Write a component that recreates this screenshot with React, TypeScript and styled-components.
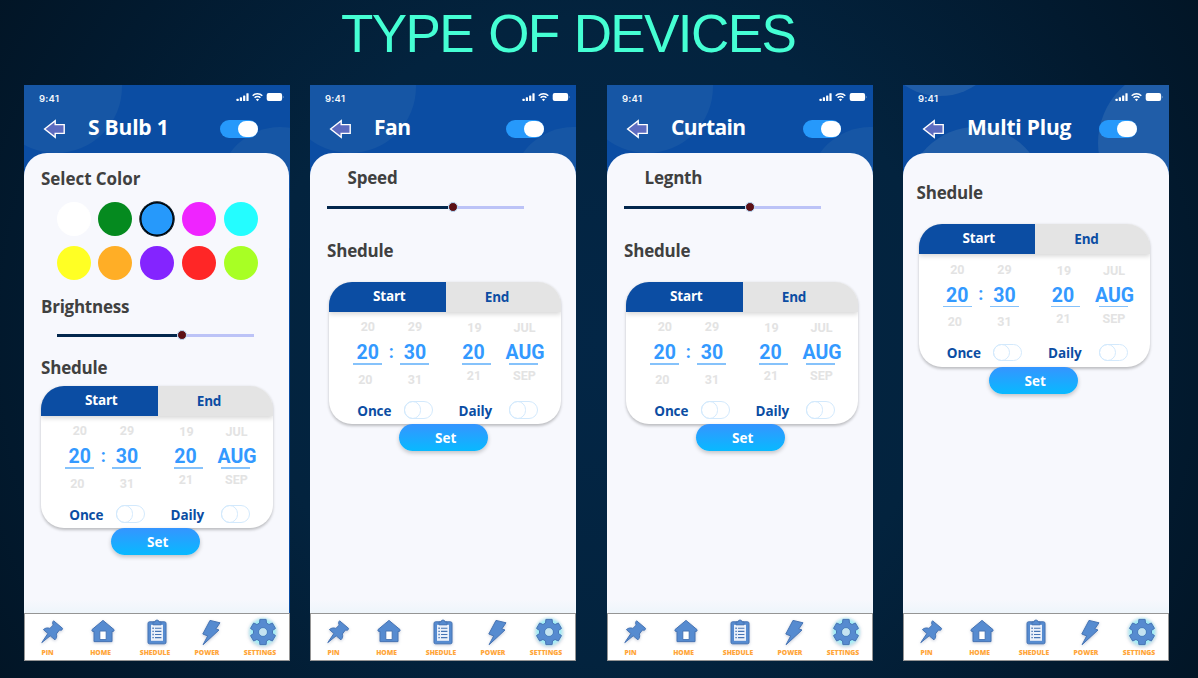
import React from "react";
import styled, { createGlobalStyle } from "styled-components";

const GlobalStyle = createGlobalStyle`
  *, *::before, *::after { box-sizing: border-box; }
  body { margin: 0; }
`;

const humanist = `"Open Sans", "Noto Sans", sans-serif`;
const grotesk = `Roboto, "Liberation Sans", sans-serif`;

const Slide = styled.main`
  width: 1198px;
  height: 678px;
  overflow: hidden;
  background: radial-gradient(ellipse 760px 720px at 600px 340px, #032646 0%, #03233e 45%, #021a2f 75%, #021322 100%);
`;

const SlideTitle = styled.h1`
  margin: 0;
  height: 85px;
  padding: 2px 0 0 341px;
  font: 400 53px/64px "Liberation Sans", Arial, sans-serif;
  letter-spacing: -1.6px;
  word-spacing: 2px;
  color: #45ffd4;
  white-space: nowrap;
`;

const Gallery = styled.div`
  display: grid;
  grid-template-columns: 286px 297px 296px 266px;
  padding-left: 24px;
`;

const Phone = styled.section`
  position: relative;
  display: flex;
  flex-direction: column;
  width: 266px;
  height: 576px;
  overflow: hidden;
  background: #0b4da3;
`;

const Bubble = styled.span<{ $x: number; $y: number; $r: number; $alpha: number }>`
  position: absolute;
  left: ${(p) => p.$x - p.$r}px;
  top: ${(p) => p.$y - p.$r}px;
  width: ${(p) => p.$r * 2}px;
  height: ${(p) => p.$r * 2}px;
  border-radius: 50%;
  background: rgba(240, 255, 225, ${(p) => p.$alpha});
`;

const StatusBar = styled.div`
  position: relative;
  display: flex;
  justify-content: space-between;
  height: 28px;
  padding: 7px 4.5px 0 15px;
`;

const Clock = styled.span`
  font: 600 9.5px/13px Inter, sans-serif;
  letter-spacing: 0.25px;
  color: #f2f6fc;
`;

const TitleBar = styled.header`
  position: relative;
  display: flex;
  align-items: flex-start;
  height: 40px;
  padding: 0 32px 0 19px;
`;

const BackArrow = styled.svg`
  flex: none;
  width: 23px;
  height: 20px;
  margin: 6px 22px 0 0;
`;

const DeviceName = styled.h2<{ $spacing: number }>`
  flex: 1;
  margin: 0;
  font: 700 21px/28px ${humanist};
  letter-spacing: ${(p) => p.$spacing}px;
  color: #fff;
  white-space: nowrap;
`;

const PowerToggle = styled.span`
  display: flex;
  justify-content: flex-end;
  width: 38px;
  height: 18px;
  margin-top: 7px;
  border-radius: 9px;
  background: #2699fb;
  &::after {
    content: "";
    width: 20px;
    height: 16px;
    margin: 1px 0.5px;
    border-radius: 8px;
    background: #fff;
  }
`;

const Sheet = styled.div<{ $inset?: boolean }>`
  position: relative;
  flex: 1;
  width: ${(p) => (p.$inset ? 264.5 : 266)}px;
  border-radius: 23px 23px 0 0;
  background: linear-gradient(#f7f8fd 0, #f7f8fd 97%, #eef5fb 100%);
`;

const Heading = styled.h3<{ $top: number; $left: number; $spacing?: number }>`
  margin: 0 0 -1px;
  padding: ${(p) => p.$top + 1}px 0 0 ${(p) => p.$left}px;
  font: 700 17px/24px ${humanist};
  letter-spacing: ${(p) => p.$spacing ?? -0.2}px;
  color: #404040;
`;

const Palette = styled.div`
  display: grid;
  grid-template-columns: repeat(5, 34px);
  gap: 9.5px 7.85px;
  padding: 12px 0 0 32.5px;
`;

const Swatch = styled.span<{ $color: string; $selected?: boolean }>`
  height: 34px;
  border-radius: 50%;
  background: ${(p) => p.$color};
  box-shadow: ${(p) => (p.$selected ? "inset 0 0 0 1.5px #000, 0 0 0 0.7px #000" : "none")};
`;

const Slider = styled.div<{ $top: number; $left: number }>`
  display: flex;
  align-items: center;
  width: 197px;
  height: 10px;
  margin: ${(p) => p.$top}px 0 0 ${(p) => p.$left}px;
  &::before {
    content: "";
    width: 120.5px;
    height: 3px;
    background: #03274d;
  }
  &::after {
    content: "";
    flex: 1;
    height: 3px;
    background: #bcc3f7;
  }
`;

const Thumb = styled.span`
  width: 10px;
  height: 10px;
  border: 1px solid #b5daf8;
  border-radius: 50%;
  background: #5c1015;
`;

const ScheduleCard = styled.div<{ $top: number; $left: number }>`
  width: 231.5px;
  height: 142.5px;
  margin: ${(p) => p.$top}px 0 0 ${(p) => p.$left}px;
  overflow: hidden;
  border-radius: 23px;
  background: #fff;
  box-shadow: 0 1.5px 3px rgba(0, 0, 0, 0.24);
`;

const Tabs = styled.div`
  display: grid;
  grid-template-columns: 116.5px 115px;
  height: 30px;
  background: #e4e4e4;
  box-shadow: 0 2px 5px rgba(0, 0, 0, 0.17);
`;

const Tab = styled.span<{ $active?: boolean }>`
  height: 30px;
  padding-left: ${(p) => (p.$active ? 4 : 0)}px;
  padding-right: ${(p) => (p.$active ? 0 : 12)}px;
  font: 700 13.5px/${(p) => (p.$active ? 29 : 30)}px ${humanist};
  letter-spacing: -0.15px;
  text-align: center;
  color: ${(p) => (p.$active ? "#fff" : "#0b4da3")};
  background: ${(p) => (p.$active ? "#0b4da3" : "transparent")};
`;

const Picker = styled.div`
  display: flex;
  height: 88px;
  padding-left: 24.3px;
`;

const Wheel = styled.div<{ $gap: number }>`
  display: flex;
  flex-direction: column;
  align-items: center;
  width: 29px;
  margin-right: ${(p) => p.$gap}px;
  white-space: nowrap;
`;

const Faded = styled.span<{ $top: number; $shift?: number }>`
  height: ${(p) => 16 + p.$top}px;
  padding-top: ${(p) => p.$top}px;
  margin-left: ${(p) => p.$shift ?? 0}px;
  font: 700 12.5px/16px ${grotesk};
  color: #e3e3e3;
`;

const Spacer = styled.span<{ $h: number }>`
  height: ${(p) => p.$h}px;
`;

const Chosen = styled.span<{ $shift?: number }>`
  height: 22px;
  margin-left: ${(p) => p.$shift ?? 0}px;
  font: 700 19.5px/25.5px ${grotesk};
  color: #3399ff;
`;

const Underline = styled.span`
  width: 29px;
  height: 1.5px;
  margin-top: 1px;
  background: #85c2fb;
`;

const Colon = styled.span`
  width: 18.2px;
  padding-top: 30px;
  font: 700 18px/20px ${grotesk};
  text-align: center;
  color: #3399ff;
`;

const RepeatRow = styled.div`
  display: flex;
  padding-left: 28.3px;
  font: 700 13.5px/22px ${humanist};
  letter-spacing: -0.15px;
  color: #0b4da3;
`;

const RepeatLabel = styled.span<{ $width: number }>`
  flex: none;
  width: ${(p) => p.$width}px;
`;

const MiniToggle = styled.span`
  flex: none;
  width: 29px;
  height: 17.5px;
  margin: 1.5px 26px 0 0;
  border: 1px solid #d3e9fc;
  border-radius: 9px;
  &::after {
    content: "";
    display: block;
    width: 17px;
    height: 17.5px;
    margin: -1px 0 0 -1px;
    border: 1px solid #d3e9fc;
    border-radius: 9px;
  }
`;

const SetButton = styled.button<{ $left: number }>`
  display: block;
  width: 89px;
  height: 27px;
  margin-left: ${(p) => p.$left}px;
  padding: 1px 0 0 4px;
  border: 0;
  border-radius: 13.5px;
  background: linear-gradient(#3595ff, #08b9ff);
  box-shadow: 0 2px 4px rgba(0, 0, 0, 0.22);
  font: 700 13.5px/26px ${humanist};
  letter-spacing: 0;
  color: #fff;
`;

const NavBar = styled.nav`
  position: relative;
  display: grid;
  grid-template-columns: 45px 61px 48px 56px 50px;
  height: 48px;
  border: 1px solid #959595;
  background: #fff;
`;

const NavItem = styled.div`
  display: flex;
  flex-direction: column;
  align-items: center;
  padding-top: 3px;
`;

const NavIcon = styled.svg<{ $shift: number }>`
  flex: none;
  width: 34px;
  height: 30px;
  margin-left: ${(p) => p.$shift * 2}px;
  overflow: visible;
  fill: #568bd0;
  stroke: #4674b4;
  stroke-width: 1;
  stroke-linejoin: round;
  filter: drop-shadow(0 1.5px 1.5px rgba(40, 60, 110, 0.28));
`;

const NavLabel = styled.span`
  margin-top: 1px;
  font: 800 6.8px/10px ${humanist};
  letter-spacing: -0.05px;
  color: #ffa63a;
  white-space: nowrap;
`;

const gearPath = (() => {
  const points: string[] = [];
  const push = (deg: number, r: number) => {
    const a = (deg * Math.PI) / 180;
    points.push(`${(17 + r * Math.cos(a)).toFixed(2)} ${(15 + r * Math.sin(a)).toFixed(2)}`);
  };
  for (let i = 0; i < 6; i++) {
    const c = i * 60 - 90;
    push(c - 21, 9.6);
    push(c - 14, 13);
    push(c + 14, 13);
    push(c + 21, 9.6);
  }
  return `M${points.join("L")}ZM21.2 15a4.2 4.2 0 1 0-8.4 0a4.2 4.2 0 1 0 8.4 0Z`;
})();

function StatusIcons() {
  return (
    <svg width="50" height="12" viewBox="0 0 50 12" fill="#fff">
      <rect x="0.5" y="6.8" width="2.2" height="2.2" rx="0.5" />
      <rect x="3.8" y="5.3" width="2.2" height="3.7" rx="0.5" />
      <rect x="7.1" y="3.4" width="2.2" height="5.6" rx="0.5" />
      <rect x="10.4" y="1.2" width="2.2" height="7.8" rx="0.5" />
      <g fill="none" stroke="#fff" strokeWidth="1.5">
        <path d="M16.7 3.7a6.8 6.8 0 0 1 9.6 0" />
        <path d="M18.6 5.8a4.1 4.1 0 0 1 5.8 0" />
      </g>
      <path d="M19.9 7.4a2.3 2.3 0 0 1 3.2 0L21.5 9.2z" />
      <rect x="30.7" y="1" width="15.4" height="8" rx="2" />
      <path d="M46.9 3.7q1.4 1.3 0 2.6z" opacity="0.7" />
    </svg>
  );
}

function Navigation() {
  return (
    <NavBar>
      <NavItem>
        <NavIcon $shift={4.7} viewBox="0 0 34 30">
          <path d="M18.6 3.8L27.6 11.4C27.4 13.4 25.8 13.5 24.4 13L21.3 17C22.2 19.2 21.6 21.4 19.9 22.8L15.2 18.8L6.8 25.6L12.9 16.5L8.4 12.6C10.2 10.8 12.8 10.6 14.9 11.4L18.3 8C17.3 6.6 17.4 4.8 18.6 3.8Z" />
        </NavIcon>
        <NavLabel>PIN</NavLabel>
      </NavItem>
      <NavItem>
        <NavIcon $shift={2.7} viewBox="0 0 34 30">
          <path d="M17 3.4L28 12.6Q28.6 14 27.2 14.4H26V24.6H8V14.4H6.8Q5.4 14 6 12.6Z" />
          <rect x="13.8" y="14" width="6.4" height="8.6" fill="#fff" />
        </NavIcon>
        <NavLabel>HOME</NavLabel>
      </NavItem>
      <NavItem>
        <NavIcon $shift={2.4} viewBox="0 0 34 30">
          <rect x="8" y="4.8" width="18" height="22" rx="1.5" />
          <rect x="11" y="7.8" width="12" height="16" fill="#eaf0fa" stroke="none" />
          <path d="M13 7.8V5H15Q15.2 3 17 3T19 5H21V7.8Z" />
          <path fill="none" strokeWidth="1.4" d="M12.4 11.3h1.4M12.4 14.4h1.4M12.4 17.5h1.4M12.4 20.6h1.4" />
          <path fill="none" strokeWidth="1.1" d="M15 11.3h6.4M15 14.4h6.4M15 17.5h6.4M15 20.6h6.4" />
        </NavIcon>
        <NavLabel>SHEDULE</NavLabel>
      </NavItem>
      <NavItem>
        <NavIcon $shift={4.3} viewBox="0 0 34 30">
          <path d="M16 3.4L26 5.8L21.8 11.9L25 13L9.1 27.7L13.7 18.9L8.8 17Z" />
        </NavIcon>
        <NavLabel>POWER</NavLabel>
      </NavItem>
      <NavItem>
        <NavIcon $shift={2.8} viewBox="0 0 34 30">
          <defs>
            <radialGradient id="settingsGlow">
              <stop offset="0" stopColor="#8eeaf5" />
              <stop offset="0.72" stopColor="#a5edf6" />
              <stop offset="1" stopColor="#d9f8fb" stopOpacity="0" />
            </radialGradient>
          </defs>
          <circle cx="17" cy="15" r="16" fill="url(#settingsGlow)" stroke="none" />
          <path fillRule="evenodd" d={gearPath} />
          <circle cx="17" cy="15" r="3.8" fill="#c5e3f1" stroke="none" />
        </NavIcon>
        <NavLabel>SETTINGS</NavLabel>
      </NavItem>
    </NavBar>
  );
}

function Schedule({ top, left }: { top: number; left: number }) {
  return (
    <>
      <ScheduleCard $top={top} $left={left}>
        <Tabs>
          <Tab $active>Start</Tab>
          <Tab>End</Tab>
        </Tabs>
        <Picker>
          <Wheel $gap={0}>
            <Faded $top={7.5}>20</Faded>
            <Spacer $h={5} />
            <Chosen>20</Chosen>
            <Underline />
            <Faded $top={7} $shift={-5}>20</Faded>
          </Wheel>
          <Colon>:</Colon>
          <Wheel $gap={32.5}>
            <Faded $top={7.5}>29</Faded>
            <Spacer $h={5} />
            <Chosen>30</Chosen>
            <Underline />
            <Faded $top={7}>31</Faded>
          </Wheel>
          <Wheel $gap={18.5}>
            <Faded $top={8.5} $shift={-4}>19</Faded>
            <Spacer $h={4} />
            <Chosen $shift={-6}>20</Chosen>
            <Underline />
            <Faded $top={3.5} $shift={-5}>21</Faded>
          </Wheel>
          <Wheel $gap={0}>
            <Faded $top={8.5} $shift={1}>JUL</Faded>
            <Spacer $h={4} />
            <Chosen $shift={2}>AUG</Chosen>
            <Underline />
            <Faded $top={3.5} $shift={1}>SEP</Faded>
          </Wheel>
        </Picker>
        <RepeatRow>
          <RepeatLabel $width={46.3}>Once</RepeatLabel>
          <MiniToggle />
          <RepeatLabel $width={50.7}>Daily</RepeatLabel>
          <MiniToggle />
        </RepeatRow>
      </ScheduleCard>
      <SetButton $left={left + 70.2}>Set</SetButton>
    </>
  );
}

interface BubbleSpec {
  x: number;
  y: number;
  r: number;
}

interface ScreenProps {
  name: string;
  spacing?: number;
  bubbles: BubbleSpec[];
  alpha?: number;
  inset?: boolean;
  children: React.ReactNode;
}

function Screen({ name, spacing = -0.2, bubbles, alpha = 0.05, inset, children }: ScreenProps) {
  return (
    <Phone>
      {bubbles.map((b, i) => (
        <Bubble key={i} $x={b.x} $y={b.y} $r={b.r} $alpha={alpha} />
      ))}
      <StatusBar>
        <Clock>9:41</Clock>
        <StatusIcons />
      </StatusBar>
      <TitleBar>
        <BackArrow viewBox="0 0 23 20">
          <path d="M1.6 10L12.2 1.6V5.6H21.2V14.4H12.2V18.4Z" fill="#5c6bc0" stroke="#fff" strokeWidth="1.4" />
        </BackArrow>
        <DeviceName $spacing={spacing}>{name}</DeviceName>
        <PowerToggle />
      </TitleBar>
      <Sheet $inset={inset}>{children}</Sheet>
      <Navigation />
    </Phone>
  );
}

const swatches = [
  "#ffffff", "#058a1f", "#2699fb", "#ef24ff", "#24fdff",
  "#ffff24", "#ffae26", "#8424ff", "#ff2626", "#a8ff24",
];

const sideBubbles: BubbleSpec[] = [
  { x: 40, y: 2, r: 66 },
  { x: 263, y: 103, r: 61 },
];

export default function App() {
  return (
    <>
      <GlobalStyle />
      <Slide>
        <SlideTitle>TYPE OF DEVICES</SlideTitle>
        <Gallery>
          <Screen name="S Bulb 1" inset bubbles={[{ x: 32, y: 2, r: 66 }, { x: 256, y: 103, r: 61 }]}>
            <Heading $top={13} $left={17} $spacing={-0.05}>Select Color</Heading>
            <Palette>
              {swatches.map((c, i) => (
                <Swatch key={c} $color={c} $selected={i === 2} />
              ))}
            </Palette>
            <Heading $top={14} $left={17} $spacing={-0.25}>Brightness</Heading>
            <Slider $top={12.5} $left={32.5}><Thumb /></Slider>
            <Heading $top={15} $left={17}>Shedule</Heading>
            <Schedule top={6.5} left={17} />
          </Screen>
          <Screen name="Fan" spacing={-0.5} bubbles={sideBubbles}>
            <Heading $top={12} $left={37.5}>Speed</Heading>
            <Slider $top={13} $left={17}><Thumb /></Slider>
            <Heading $top={25.5} $left={17}>Shedule</Heading>
            <Schedule top={20.2} left={19} />
          </Screen>
          <Screen name="Curtain" spacing={-0.6} bubbles={sideBubbles}>
            <Heading $top={12} $left={37.5}>Legnth</Heading>
            <Slider $top={13} $left={17}><Thumb /></Slider>
            <Heading $top={25.5} $left={17}>Shedule</Heading>
            <Schedule top={20.2} left={19} />
          </Screen>
          <Screen
            name="Multi Plug"
            alpha={0.09}
            bubbles={[{ x: 37, y: -53, r: 64 }, { x: 73, y: 111, r: 69 }, { x: 271, y: 58, r: 76 }]}
          >
            <Heading $top={27} $left={13.5}>Shedule</Heading>
            <Schedule top={20} left={15.5} />
          </Screen>
        </Gallery>
      </Slide>
    </>
  );
}
